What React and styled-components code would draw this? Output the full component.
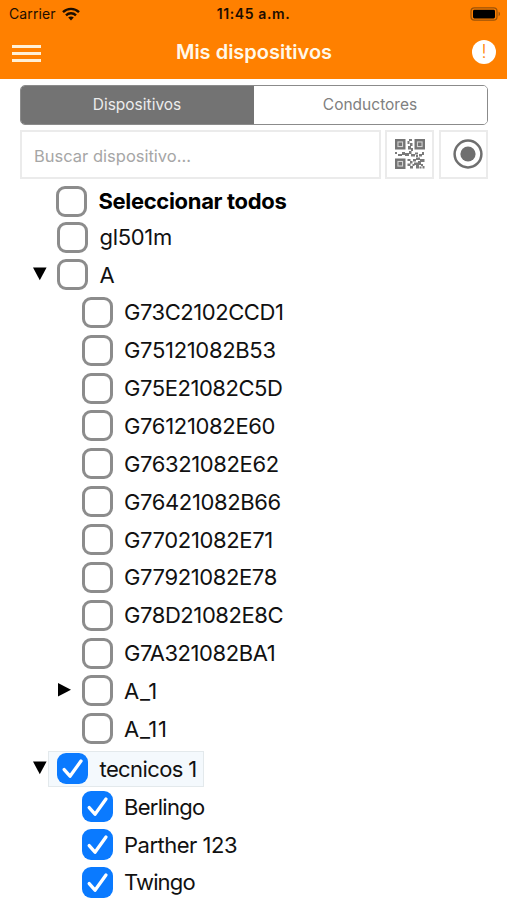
import React, { useState } from 'react'
import styled, { createGlobalStyle } from 'styled-components'

const DEVICES = [
  { id: 'gl501m', label: 'gl501m', level: 0, spacing: -0.3 },
  { id: 'A', label: 'A', level: 0, arrow: 'down' },
  { id: 'd1', label: 'G73C2102CCD1', level: 1, spacing: -0.45 },
  { id: 'd2', label: 'G75121082B53', level: 1, spacing: -0.33 },
  { id: 'd3', label: 'G75E21082C5D', level: 1, spacing: -0.45 },
  { id: 'd4', label: 'G76121082E60', level: 1, spacing: -0.33 },
  { id: 'd5', label: 'G76321082E62', level: 1, spacing: -0.38 },
  { id: 'd6', label: 'G76421082B66', level: 1, spacing: -0.38 },
  { id: 'd7', label: 'G77021082E71', level: 1, spacing: -0.36 },
  { id: 'd8', label: 'G77921082E78', level: 1, spacing: -0.38 },
  { id: 'd9', label: 'G78D21082E8C', level: 1, spacing: -0.42 },
  { id: 'd10', label: 'G7A321082BA1', level: 1, spacing: -0.42 },
  { id: 'A_1', label: 'A_1', level: 1, arrow: 'right', spacing: 0.7 },
  { id: 'A_11', label: 'A_11', level: 1, spacing: 0.7 },
  { id: 'tec', label: 'tecnicos 1', level: 0, arrow: 'down', selected: true, spacing: -0.6 },
  { id: 'berlingo', label: 'Berlingo', level: 1, spacing: -0.7 },
  { id: 'parther', label: 'Parther 123', level: 1, spacing: -0.5 },
  { id: 'twingo', label: 'Twingo', level: 1, spacing: -0.85 },
]

const WifiIcon = () => (
  <svg width="18" height="14" viewBox="0 0 18 14">
    <g fill="none" stroke="#1c0e00" strokeWidth="2.4">
      <path d="M1 5.2C5.4 0.8 12.6 0.8 17 5.2" />
      <path d="M4 8.3C6.8 5.6 11.2 5.6 14 8.3" />
    </g>
    <path d="M6.2 10.5C7.8 9.1 10.2 9.1 11.8 10.5L9 13.4Z" fill="#1c0e00" />
  </svg>
)

const BatteryIcon = () => (
  <svg width="31" height="14" viewBox="0 0 31 14">
    <rect x="1" y="0.9" width="26" height="12.2" rx="3.4" fill="none" stroke="#9b5208" strokeWidth="1.2" />
    <rect x="3" y="2.8" width="22" height="8.6" rx="1.4" fill="#000" />
    <path d="M28.6 4.8C30.4 5.4 30.4 8.6 28.6 9.2Z" fill="#9b5208" />
  </svg>
)

const QrCorner = ({ x, y }) => (
  <g>
    <rect x={x + 1.2} y={y + 1.2} width="8.1" height="8.1" fill="#d2d2d2" stroke="#747474" strokeWidth="2.4" />
    <rect x={x + 3.5} y={y + 3.5} width="3.5" height="3.5" fill="#747474" />
  </g>
)

const QrIcon = () => (
  <svg width="30" height="30" viewBox="0 0 30 30">
    <QrCorner x={0} y={0} />
    <QrCorner x={19.5} y={0} />
    <QrCorner x={0} y={19.5} />
    <g fill="#7a7a7a">
      <path d="M14 0h3v2h-3zM12.5 2h2v3h-2zM15 4h2.5v3H15zM13 7h3v3.5h-3zM16 9h2v3h-2z" />
      <path d="M0 13h2v2H0zM3 15h4v2H3zM7 13h3v3H7zM10 14h4v3h-4zM14 12h2.5v3H14zM16 15h4v2.5h-4zM20 13.5h3v2h-3zM24 15h3v2.5h-3zM27 13h2v3h-2zM21 16h2v2h-2z" />
      <path d="M12.5 20h3v2h-3zM15 22h2.5v2.5H15zM12.5 24.5h3V27h-3zM15 27h3v2.5h-3zM18 20h3v2.5h-3zM21 18.5h4V21h-4zM25 20h4.5v3H25zM19 23.5h4V26h-4zM23 22h3v4h-3zM21 26h3v3.5h-3zM26 25h2v2h-2zM27.5 27h2v2.5h-2zM24.5 27.5h2v2h-2zM17.5 25h2v2h-2z" />
    </g>
  </svg>
)

const TargetIcon = () => (
  <svg width="30" height="30" viewBox="0 0 30 30">
    <circle cx="15" cy="15" r="13.4" fill="none" stroke="#6f6f6f" strokeWidth="2.5" />
    <circle cx="15" cy="15" r="7.6" fill="#6f6f6f" />
  </svg>
)

const Arrow = ({ direction }) => (
  <svg width="14" height="14" viewBox="0 0 14 14">
    <path d={direction === 'down' ? 'M0 0.5H13.6L6.8 13.3Z' : 'M0 0V13.6L13 6.8Z'} fill="#000" />
  </svg>
)

const Checkbox = ({ checked, onClick }) => (
  <Box type="button" role="checkbox" aria-checked={checked} $checked={checked} onClick={onClick}>
    {checked && (
      <svg width="31" height="31" viewBox="0 0 31 31">
        <path d="M7.2 16.6L13 23.2L24 8" fill="none" stroke="#fff" strokeWidth="3.3" strokeLinecap="round" strokeLinejoin="round" />
      </svg>
    )}
  </Box>
)

const App = () => {
  const [tab, setTab] = useState('devices')
  const [checked, setChecked] = useState(['tec', 'berlingo', 'parther', 'twingo'])

  const toggle = (id) => {
    setChecked(checked.includes(id) ? checked.filter((item) => item !== id) : [...checked, id])
  }

  const allChecked = checked.length === DEVICES.length

  return (
    <Screen>
      <GlobalStyle />
      <Header>
        <StatusBar>
          <Carrier>
            <span>Carrier</span>
            <WifiIcon />
          </Carrier>
          <Clock>11:45 a.m.</Clock>
          <Battery>
            <BatteryIcon />
          </Battery>
        </StatusBar>
        <NavBar>
          <MenuButton>
            <MenuLine />
            <MenuLine />
            <MenuLine />
          </MenuButton>
          <Title>Mis dispositivos</Title>
          <AlertBadge>!</AlertBadge>
        </NavBar>
      </Header>

      <Tabs>
        <Tab $active={tab === 'devices'} onClick={() => setTab('devices')}>
          Dispositivos
        </Tab>
        <Tab $active={tab === 'drivers'} onClick={() => setTab('drivers')}>
          Conductores
        </Tab>
      </Tabs>

      <SearchRow>
        <SearchInput placeholder="Buscar dispositivo..." />
        <ToolButton>
          <QrIcon />
        </ToolButton>
        <ToolButton $shift>
          <TargetIcon />
        </ToolButton>
      </SearchRow>

      <Tree>
        <SelectAllRow>
          <Checkbox checked={allChecked} onClick={() => setChecked(allChecked ? [] : DEVICES.map((d) => d.id))} />
          <Label $bold $spacing={-0.33}>
            Seleccionar todos
          </Label>
        </SelectAllRow>
        {DEVICES.map((device) => (
          <Row key={device.id} $level={device.level} $selected={device.selected}>
            <ArrowSlot>{device.arrow && <Arrow direction={device.arrow} />}</ArrowSlot>
            <Node $selected={device.selected}>
              <Checkbox checked={checked.includes(device.id)} onClick={() => toggle(device.id)} />
              <Label $spacing={device.spacing}>{device.label}</Label>
            </Node>
          </Row>
        ))}
      </Tree>
    </Screen>
  )
}

export default App

const GlobalStyle = createGlobalStyle`
  * {
    box-sizing: border-box;
  }
  body {
    margin: 0;
    background: #fff;
    font-family: Inter, 'Liberation Sans', sans-serif;
  }
  button {
    font-family: inherit;
    padding: 0;
    border: 0;
    background: none;
  }
  svg {
    display: block;
    flex-shrink: 0;
  }
`

const Screen = styled.div`
  width: 507px;
  height: 900px;
  overflow: hidden;
  background: #fff;
`

const Header = styled.header`
  height: 79px;
  background: #ff8000;
`

const StatusBar = styled.div`
  height: 27px;
  padding: 0 6px 0 9px;
  display: grid;
  grid-template-columns: 1fr auto 1fr;
  align-items: center;
  font-size: 14px;
  color: #1c0e00;
`

const Carrier = styled.div`
  display: flex;
  align-items: center;
  gap: 6px;
  letter-spacing: 0.1px;
`

const Clock = styled.div`
  padding-right: 3px;
  font-weight: 600;
  letter-spacing: 0.6px;
`

const Battery = styled.div`
  display: flex;
  justify-content: flex-end;
`

const NavBar = styled.div`
  height: 50px;
  padding: 0 11px 0 12px;
  display: grid;
  grid-template-columns: 1fr auto 1fr;
  align-items: center;
`

const MenuButton = styled.button`
  width: 29px;
  display: flex;
  flex-direction: column;
  gap: 4px;

  && {
    padding-top: 2px;
  }
`

const MenuLine = styled.span`
  height: 3px;
  background: #fff0d6;
`

const Title = styled.h1`
  margin: 0;
  font-size: 20px;
  font-weight: 600;
  color: #fff8ea;
`

const AlertBadge = styled.span`
  width: 24px;
  height: 24px;
  justify-self: end;
  border-radius: 50%;
  background: #fff;
  color: #ff8000;
  font-size: 18px;
  font-weight: 300;
  line-height: 23px;
  text-align: center;
`

const Tabs = styled.div`
  height: 40px;
  margin: 6px 19px 0 20px;
  display: flex;
  border: 1.5px solid #8b8b8b;
  border-radius: 5px;
  overflow: hidden;
`

const Tab = styled.button`
  flex: 1;
  font-size: 15.5px;
  background: ${(props) => (props.$active ? '#737373' : '#fff')};
  color: ${(props) => (props.$active ? '#ececec' : '#808080')};

  && {
    padding: 0 1px 2px 0;
  }
`

const SearchRow = styled.div`
  height: 49px;
  margin: 5px 19.5px 0 20px;
  display: flex;
  gap: 4.5px;
`

const SearchInput = styled.input`
  flex: 1;
  min-width: 0;
  padding: 2px 13px 0 12px;
  border: 2px solid #ebebeb;
  border-radius: 0;
  outline: none;
  font-family: inherit;
  font-size: 16.5px;

  &::placeholder {
    color: #a6a6a6;
    opacity: 1;
  }
`

const ToolButton = styled.button`
  width: 49px;
  display: flex;
  align-items: center;
  justify-content: center;

  && {
    padding: 0 0 1px ${(props) => (props.$shift ? '9px' : '0')};
    border: 2px solid #ebebeb;
  }
`

const Tree = styled.div`
  padding-top: 4px;
`

const SelectAllRow = styled.div`
  height: 36px;
  padding-left: 56px;
  display: flex;
  align-items: center;
`

const Row = styled.div`
  height: ${(props) => (props.$selected ? '38px' : '37.87px')};
  margin-top: ${(props) => (props.$selected ? '2px' : '0')};
  padding-left: ${(props) => (props.$level ? '57.5px' : '33px')};
  display: flex;
  align-items: center;

  &:nth-child(2) {
    height: 36.6px;
  }
`

const ArrowSlot = styled.div`
  width: 15px;
  padding-bottom: 1px;
`

const Node = styled.div`
  height: 36px;
  padding: 0 6px 0 8px;
  display: flex;
  align-items: center;
  border: 1px solid ${(props) => (props.$selected ? '#e3e9ec' : 'transparent')};
  background: ${(props) => (props.$selected ? '#f4f9fd' : 'transparent')};
`

const Box = styled.button`
  && {
    width: 31px;
    height: 31px;
    flex-shrink: 0;
    display: flex;
    align-items: center;
    justify-content: center;
    border: ${(props) => (props.$checked ? '0' : '3px solid #8c8c8c')};
    border-radius: 9px;
    background: ${(props) => (props.$checked ? '#0a7aff' : '#fff')};
  }
`

const Label = styled.span`
  margin-left: 11.5px;
  font-size: 22px;
  font-weight: ${(props) => (props.$bold ? 700 : 400)};
  letter-spacing: ${(props) => props.$spacing || 0}px;
  line-height: 26px;
  white-space: nowrap;
  color: ${(props) => (props.$bold ? '#000' : '#111')};
`
